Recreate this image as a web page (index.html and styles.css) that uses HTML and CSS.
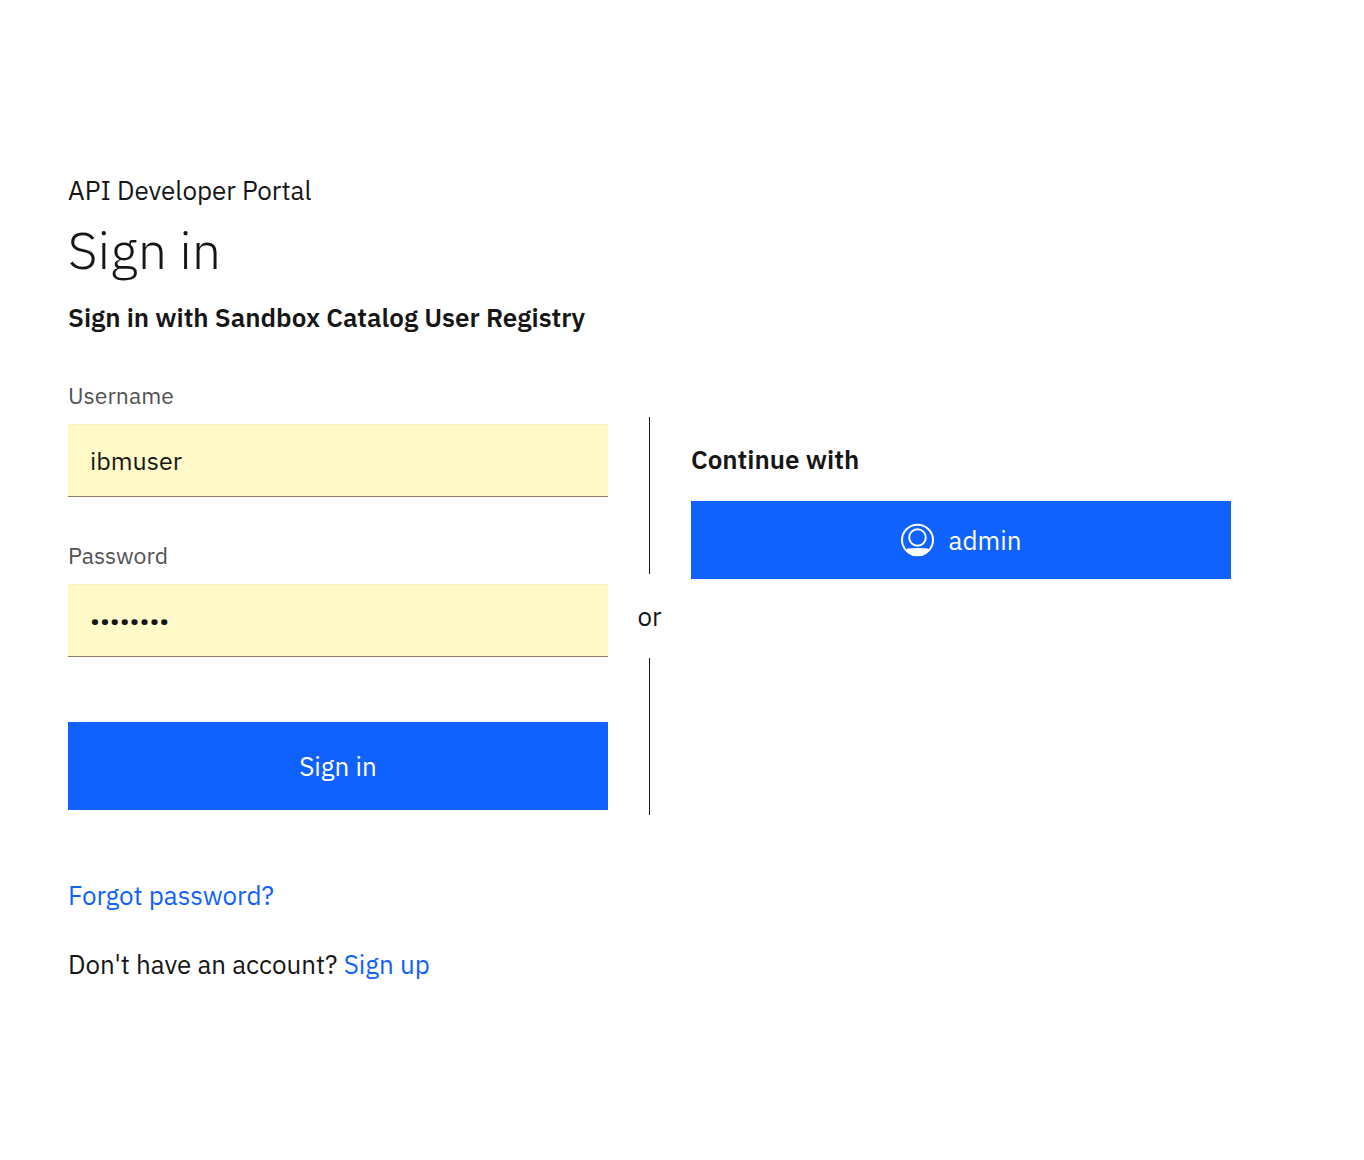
FILE: index.html
```html
<!DOCTYPE html>
<html lang="en">
<head>
<meta charset="utf-8">
<meta name="viewport" content="width=device-width, initial-scale=1">
<title>Sign in - API Developer Portal</title>
<link rel="stylesheet" href="styles.css">
</head>
<body>
<main class="page">
  <header class="intro">
    <p class="site-name">API Developer Portal</p>
    <h1 class="title">Sign in</h1>
    <h2 class="subtitle">Sign in with Sandbox Catalog User Registry</h2>
  </header>
  <div class="options">
    <form class="form">
      <div class="field">
        <label class="label" for="username">Username</label>
        <input class="input" id="username" type="text" value="ibmuser" autocomplete="username">
      </div>
      <div class="field">
        <label class="label" for="password">Password</label>
        <input class="input" id="password" type="password" value="password" autocomplete="current-password">
      </div>
      <button class="button button-submit" type="submit">Sign in</button>
    </form>
    <div class="divider"><span>or</span></div>
    <section class="registries">
      <h2 class="subtitle">Continue with</h2>
      <button class="button button-registry" type="button">
        <svg class="avatar" viewBox="0 0 34 34" aria-hidden="true">
          <path d="M4.500 27L6.500 25.500L11 25.200Q16.500 24.600 22 25.200L26.500 25.500L28.500 27L21.500 33H11.500Z" fill="currentColor"/>
          <ellipse cx="16.500" cy="17" rx="15.500" ry="15.200" fill="none" stroke="currentColor" stroke-width="2"/>
          <circle cx="16.500" cy="14.500" r="8.300" fill="none" stroke="currentColor" stroke-width="2"/>
        </svg>
        <span>admin</span>
      </button>
    </section>
  </div>
  <nav class="links">
    <p><a class="link" href="#forgot">Forgot password?</a></p>
    <p>Don't have an account? <a class="link" href="#signup">Sign up</a></p>
  </nav>
</main>
</body>
</html>
```
FILE: styles.css
```css
* {
  box-sizing: border-box;
}

body {
  margin: 0;
  background: #fff;
  color: #161616;
  font: 400 26px/36px "IBM Plex Sans", "Open Sans", sans-serif;
}

p, h1, h2 {
  margin: 0;
}

.page {
  padding: 172px 68px 64px;
}

.intro {
  display: flex;
  flex-direction: column;
  margin-bottom: 48px;
}

.title {
  margin: 10px 0 18px;
  font-size: 52px;
  font-weight: 300;
  line-height: 64px;
}

.subtitle {
  font-size: 26px;
  font-weight: 600;
  line-height: 34px;
}

.options {
  display: grid;
  grid-template-columns: minmax(0, 540px) 83px minmax(0, 540px);
}

.form {
  display: flex;
  flex-direction: column;
  gap: 45px;
}

.field {
  display: flex;
  flex-direction: column;
  gap: 16px;
}

.label {
  color: #525252;
  font-size: 23px;
  line-height: 26px;
}

.input {
  width: 100%;
  height: 73px;
  padding: 0 22px;
  border: 0;
  border-top: 1px solid #ffefb8;
  border-bottom: 1px solid #8d7f66;
  border-radius: 0;
  background: #fffac8;
  color: #161616;
  font: inherit;
  font-size: 25px;
}

.button {
  display: flex;
  align-items: center;
  justify-content: center;
  gap: 14px;
  width: 100%;
  border: 0;
  background: #0f62fe;
  color: #fff;
  font: inherit;
  cursor: pointer;
}

.button-submit {
  min-height: 88px;
  margin-top: 20px;
}

.button-registry {
  min-height: 78px;
  margin-top: 25px;
}

.avatar {
  width: 34px;
  height: 34px;
}

.divider {
  display: flex;
  flex-direction: column;
  align-items: center;
  gap: 24px;
  height: 398px;
  margin-top: 35px;
}

.divider::before,
.divider::after {
  content: "";
  flex: 1;
  width: 1px;
  background: #161616;
}

.registries {
  padding-top: 60px;
}

.links {
  display: flex;
  flex-direction: column;
  gap: 33px;
  margin-top: 62px;
}

.link {
  color: #0f62fe;
  text-decoration: none;
}
```
